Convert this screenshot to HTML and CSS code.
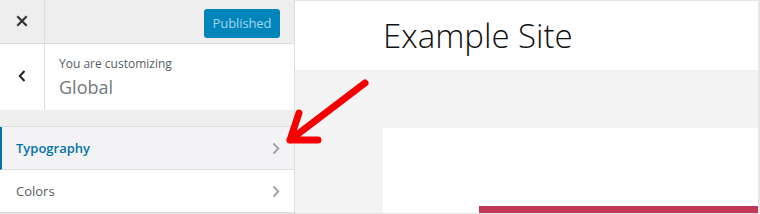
FILE: index.html
```html
<!DOCTYPE html>
<html>
<head>
<meta charset="utf-8">
<link rel="stylesheet" href="styles.css">
</head>
<body>
<div class="frame">
  <aside class="sidebar">
    <div class="header">
      <div class="close">
        <svg width="12" height="12" viewBox="0 0 12 12"><path d="M1.3 1.3 L10.7 10.7 M10.7 1.3 L1.3 10.7" stroke="#333" stroke-width="2.2" fill="none"/></svg>
      </div>
      <div class="header-main">
        <div class="publish">Published</div>
      </div>
    </div>
    <div class="info">
      <div class="back">
        <svg width="8" height="12" viewBox="0 0 8 12"><path d="M6.5 1 L1.8 6 L6.5 11" stroke="#222" stroke-width="2" fill="none"/></svg>
      </div>
      <div class="info-text">
        <div class="label">You are customizing</div>
        <div class="title">Global</div>
      </div>
    </div>
    <div class="sections">
      <div class="section active">
        <span>Typography</span>
        <svg width="8" height="13" viewBox="0 0 8 13"><path d="M1.5 1.5 L6.3 6.5 L1.5 11.5" stroke="#a0a5aa" stroke-width="2" fill="none"/></svg>
      </div>
      <div class="section">
        <span>Colors</span>
        <svg width="8" height="13" viewBox="0 0 8 13"><path d="M1.5 1.5 L6.3 6.5 L1.5 11.5" stroke="#a0a5aa" stroke-width="2" fill="none"/></svg>
      </div>
    </div>
  </aside>
  <main class="preview">
    <div class="site-header">
      <h1 class="site-title">Example Site</h1>
    </div>
    <div class="site-body">
      <div class="content">
        <div class="accent"></div>
      </div>
    </div>
  </main>
  <svg class="arrow" width="760" height="214" viewBox="0 0 760 214">
    <path d="M365 83 L290 140 M290 140 L299 113 M290 140 L318 140" stroke="#f40000" stroke-width="7" stroke-linecap="round" stroke-linejoin="round" fill="none"/>
  </svg>
</div>
</body>
</html>
```
FILE: styles.css
```css
* { box-sizing: border-box; }
html, body { margin: 0; padding: 0; }
body {
  width: 760px;
  height: 214px;
  overflow: hidden;
  font-family: "Open Sans", "Noto Sans", sans-serif;
  background: #fff;
}
.frame {
  position: relative;
  display: flex;
  width: 760px;
  height: 214px;
  border-right: 2px solid #e5e5e5;
  border-bottom: 1px solid #e5e5e5;
}
.sidebar {
  width: 295px;
  flex: none;
  background: #eee;
  border-right: 1px solid #ddd;
  display: flex;
  flex-direction: column;
}
.header {
  display: flex;
  height: 45px;
  border-bottom: 1px solid #ddd;
  background: #eee;
}
.close {
  width: 45px;
  border-right: 1px solid #ddd;
  display: flex;
  align-items: center;
  justify-content: center;
  padding-bottom: 1px;
}
.header-main {
  flex: 1;
  display: flex;
  justify-content: flex-end;
  padding: 9px 14px 0 0;
}
.publish {
  width: 76px;
  height: 29px;
  background: #0085ba;
  border-radius: 3px;
  color: #a5d6ea;
  font-size: 13px;
  line-height: 29px;
  text-align: center;
  letter-spacing: -0.1px;
}
.info {
  display: flex;
  height: 67px;
  background: #fff;
}
.back {
  width: 45px;
  border-right: 1px solid #ddd;
  display: flex;
  align-items: center;
  justify-content: center;
  padding-bottom: 2px;
}
.info-text {
  padding: 12px 0 0 14px;
}
.label {
  font-size: 12px;
  color: #555d66;
  line-height: 16px;
}
.title {
  font-size: 18px;
  color: #72777c;
  line-height: 24px;
  margin-top: 3px;
}
.sections {
  margin-top: 16px;
  border-top: 1px solid #ddd;
}
.section {
  height: 43px;
  display: flex;
  align-items: center;
  justify-content: space-between;
  padding: 0 14px 0 16px;
  background: #fff;
  border-bottom: 1px solid #ddd;
  font-size: 13px;
  color: #555d66;
}
.section.active {
  background: #f3f3f5;
  color: #0073aa;
  font-weight: 600;
  border-left: 2px solid #0073aa;
  padding-left: 14px;
}
.section svg { margin-top: 1px; }
.preview {
  flex: 1;
  display: flex;
  flex-direction: column;
  border-top: 1px solid #e5e5e5;
  background: #f4f4f4;
}
.site-header {
  height: 70px;
  background: #fff;
  border-bottom: 1px solid #eee;
  padding-left: 88px;
}
.site-title {
  margin: 0;
  font-weight: 300;
  font-size: 33px;
  line-height: 70px;
  color: #111;
  padding-bottom: 4px;
}
.site-body {
  flex: 1;
  display: flex;
  flex-direction: column;
  padding: 57px 0 0 88px;
}
.content {
  flex: 1;
  background: #fff;
  display: flex;
  flex-direction: column;
  justify-content: flex-end;
  padding-left: 96px;
}
.accent {
  height: 7px;
  background: #c13758;
}
.arrow {
  position: absolute;
  left: 0;
  top: 0;
  pointer-events: none;
}
```
